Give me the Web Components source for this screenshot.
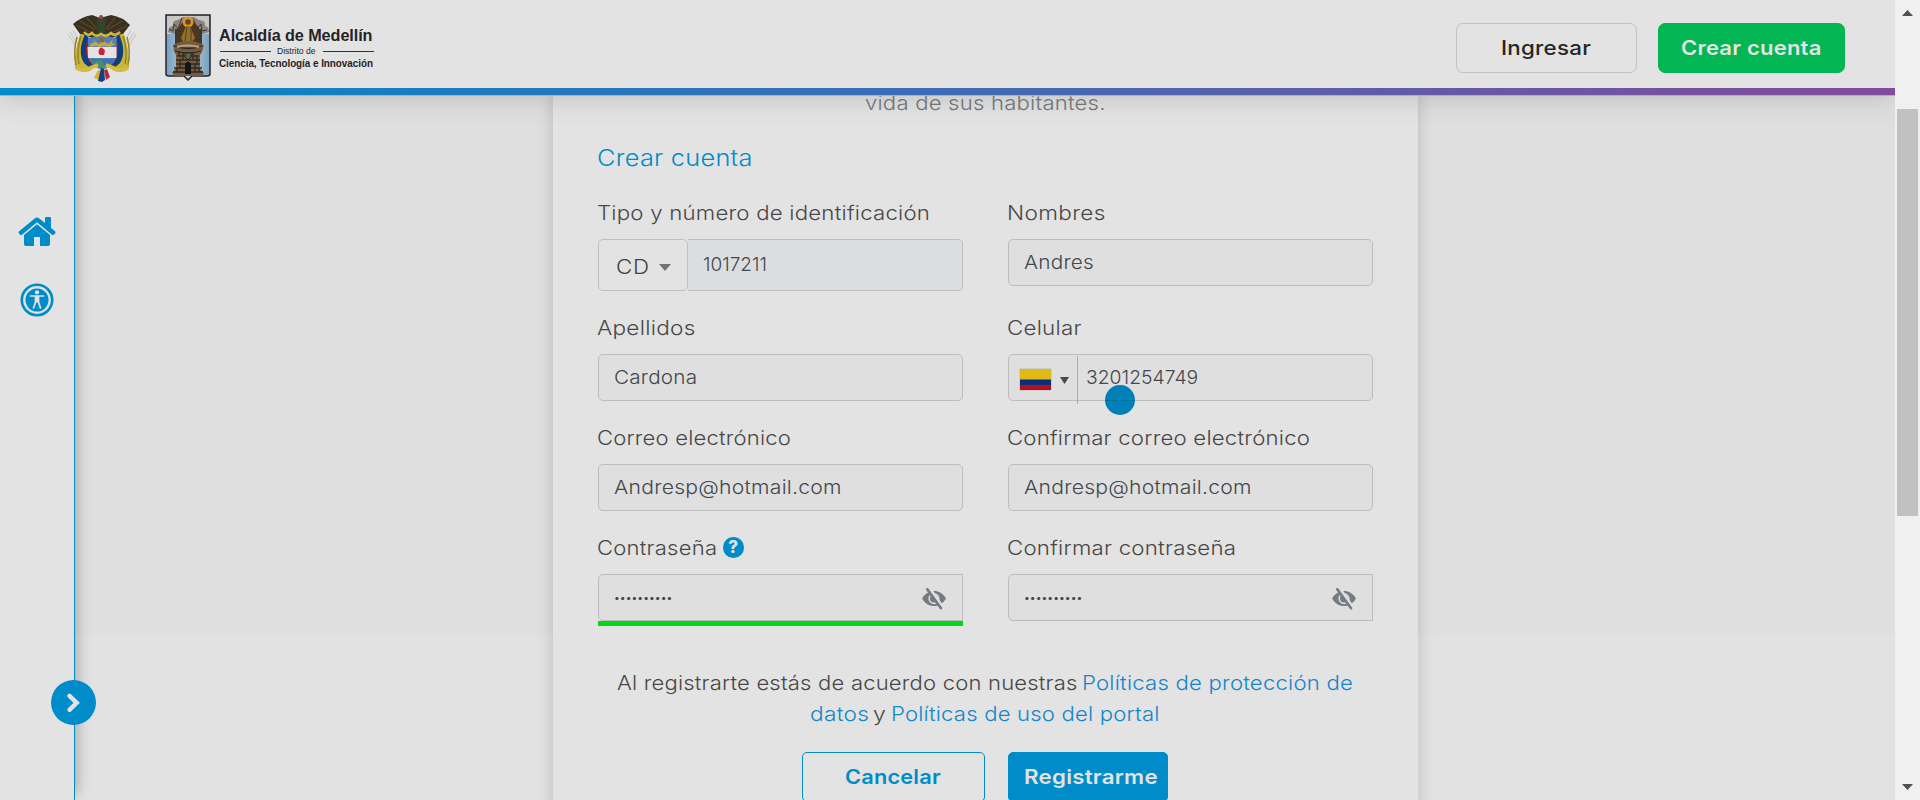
<!DOCTYPE html>
<html lang="es">
<head>
<meta charset="utf-8">
<title>Crear cuenta - Alcaldía de Medellín</title>
<style>
html,body{margin:0;height:100%}
body{height:800px;overflow:hidden;background:#e3e3e3;color:#484848;font:300 20px/30px Inter,"Open Sans",sans-serif;--blue:#008bc9;--surface:#e3e3e3}
</style>
</head>
<body>
<portal-app></portal-app>
<script>
function define(name, html, ready) {
  const tpl = document.createElement('template');
  tpl.innerHTML = html;
  customElements.define(name, class extends HTMLElement {
    constructor() {
      super();
      this.attachShadow({mode: 'open'}).append(tpl.content.cloneNode(true));
    }
    connectedCallback() { if (ready) ready(this, this.shadowRoot); }
  });
}

/* Text set to a fixed measure: mostly glyph width, a little tracking. */
define('fit-text', `<style>
:host{display:inline-block;white-space:nowrap;vertical-align:top;text-align:left}
span{display:inline-block;transform-origin:0 50%;margin-left:-1px}
</style><span><slot></slot></span>`, (el, root) => {
  const w = +el.getAttribute('w'), span = root.querySelector('span');
  el.style.width = w + 'px';
  const n = el.textContent.length, natural = span.offsetWidth, target = w + 1;
  const scale = Math.pow(target / natural, 0.85);
  span.style.letterSpacing = ((target / scale - natural) / Math.max(1, n - 1)) + 'px';
  span.style.transform = 'scaleX(' + scale + ')';
});

define('national-arms', `<style>:host{display:block;width:68px;height:70px}svg{display:block}</style>
<svg width="68" height="70" viewBox="0 0 68 70">
<path d="M8 28L2 18M8 33L0 20M60 28l6-10M60 33l8-13M9 23l-4-7M59 23l4-7" stroke="#cbcbc9" stroke-width="1.3"/>
<path d="M5 10Q13 3 24 1L32 4 43 1Q55 3 62 11L55 20 46 23 37 28 29 27 22 23 12 20Z" fill="#39301f"/>
<path d="M8 11l14 7M12 7l15 9M19 4l10 11M59 12l-14 6M54 7l-15 9M47 4L38 15" stroke="#5b4a29" stroke-width="1.2"/>
<path d="M29 6l4-5 5 4-1 11 3 5-7 4-6-4 3-6Z" fill="#35432a"/><circle cx="33" cy="3" r="2" fill="#a74452"/>
<path d="M12 20Q6 38 7 54Q15 61 24 56L20 51Q14 43 18 21Z" fill="#c9b638"/>
<path d="M9 23Q5 38 8 51M13 22Q8 38 11 50" fill="none" stroke="#948329" stroke-width="1.5"/>
<path d="M17 20Q9 38 16 49L23 55 28 51Q17 42 22 25Z" fill="#0e407f"/>
<path d="M21 26Q16 42 27 52" fill="none" stroke="#a51d31" stroke-width="3.2"/>
<path d="M56 20Q62 38 61 54Q53 61 44 56L48 51Q54 43 50 21Z" fill="#c9b638"/>
<path d="M59 23Q63 38 60 51M55 22Q60 38 57 50" fill="none" stroke="#948329" stroke-width="1.5"/>
<path d="M51 20Q59 38 52 49L45 55 40 51Q51 42 46 25Z" fill="#0e407f"/>
<path d="M47 26Q52 42 41 52" fill="none" stroke="#a51d31" stroke-width="3.2"/>
<path d="M20 24Q34 20 49 24L48 44Q45 52 34 56 23 52 20 43Z" fill="#4f7dbd"/>
<path d="M19.500 33h29v11H20Z" fill="#e4e2e3"/>
<path d="M16 18q4 5 8 1q4 5 9 1q5 4 10-1q4 4 9-1" fill="none" stroke="#cfb53d" stroke-width="2.600"/>
<path d="M22 30l5-2-3-3 7 5 4-4 5 4 5-5-1 4 4 1-6 3-6-1-4 1-5-1-5 1Z" fill="#c1a643"/>
<circle cx="34" cy="26" r="2.500" fill="#916638"/><path d="M30.500 39q0-5.500 3.500-5.500l3 3-1 4.500h-4Z" fill="#c72334"/>
<path d="M22 45h25l-4 6-9 4-8-4Z" fill="#3d74ae"/><path d="M24 48l9-2 4 5 7-1-9 5-9-4Z" fill="#498e6f"/>
<path d="M8 54q7 4 14 0l8-3M60 54q-7 4-14 0l-8-3" fill="none" stroke="#d3bd3e" stroke-width="3.600"/>
<path d="M30 56l-4 8 5 2 3-9Z" fill="#d4b531"/><path d="M33 54l-3 13 4 1 3-2-1-11Z" fill="#173f83"/><path d="M36 56l2 10 4-3-3-8Z" fill="#bd293c"/>
</svg>`);

define('medellin-shield', `<style>:host{display:block;width:46px;height:67px}svg{display:block}</style>
<svg width="46" height="67" viewBox="0 0 46 67">
<defs><linearGradient id="s" x1="0" x2="1"><stop stop-color="#749fc4"/><stop offset=".5" stop-color="#c0d3df"/><stop offset="1" stop-color="#779fbe"/></linearGradient></defs>
<path d="M1 1h44v59q0 2-3 2H27l-4 4-4-4H4q-3 0-3-2Z" fill="url(#s)" stroke="#292427" stroke-width="1.5"/>
<path d="M2 2h42v18H2Z" fill="#c9c7c5"/>
<path d="M3 18q1-6 5-6-1-6 5-6l5-3h11l5 3q7 0 6 6 4 0 4 6l-6 2H9Z" fill="#8b8380"/>
<path d="M4 15l4 2 1-7 4 5 4-11M42 16l-5 1-1-7-4 5-4-10" stroke="#413735" fill="none"/>
<path d="M10 15h6v17h-6ZM31 15h6v17h-6Z" fill="#44352b"/>
<path d="M14 13l5-7h9l6 8-1 14-9 3-10-4Z" fill="#4a371f"/>
<circle cx="23" cy="8" r="5.5" fill="#d9942b"/><circle cx="23" cy="8" r="2.800" fill="#674027"/>
<path d="M21 12h4l5 12-4 5H19l-3-5Z" fill="#92702a"/><path d="M22 13l-2 14M26 13v14" stroke="#573f19"/>
<path d="M8 31q15-8 31 0l-2 7-2 3v14l4 4-2 3H10l-3-3 4-5V41l-2-4Z" fill="#755c40"/>
<path d="M9 32q14 5 28 0M10 37q13 4 26 0M12 42h22M11 46h24M11 50h24M9 54h28M8 58h30M14 37v5M18 38v8M28 38v8M32 42v8M15 46v8M30 50v8M12 54v4M34 54v4" fill="none" stroke="#302821" stroke-width="1.3"/>
<path d="M12 33q10-3 22 0" fill="none" stroke="#b9a487" stroke-width="2"/>
<path d="M20 60V50q3-5 6 0v10Z" fill="#151416"/><path d="M21 39h5v4l-3 3-3-3Z" fill="#516b46" stroke="#292b20"/>
</svg>`);

define('city-brand', `<style>
:host{display:grid;width:154px;grid-template-rows:20px 11px 13px;font-family:"Liberation Sans",sans-serif;font-weight:700;color:#262326}
.t{font-size:17px;line-height:20px}.d{display:flex;align-items:center;justify-content:space-between;font-size:9px;line-height:11px;font-weight:400}
.d i{height:1px;width:51px;background:#343234}.b{font-size:10.500px;line-height:13px}
</style><div class="t"><fit-text w="153">Alcaldía de Medellín</fit-text></div>
<div class="d"><i></i><fit-text w="38">Distrito de</fit-text><i></i></div>
<div class="b"><fit-text w="153">Ciencia, Tecnología e Innovación</fit-text></div>`);

define('ui-button', `<style>
:host{display:flex;box-sizing:border-box;align-items:center;justify-content:center;height:50px;border:1px solid #c2c2c2;border-radius:7px;font-weight:500;font-size:20px;color:#262626}
:host([kind=success]){background:#02b653;border-color:#02b653;color:#e3e3e3;font-weight:600}
:host([kind=outline]){border-color:var(--blue);border-radius:5px;color:var(--blue);font-weight:600}
:host([kind=primary]){background:var(--blue);border-color:var(--blue);border-radius:5px;color:#e3e3e3;font-weight:600}
</style><slot></slot>`);

define('app-header', `<style>
:host{display:block;position:relative;z-index:3;height:96px;box-sizing:border-box;background:var(--surface);box-shadow:0 4px 24px rgba(70,80,95,.2)}
.in{display:flex;height:88px;padding:0 50px 0 68px;box-sizing:border-box}
national-arms{margin:14px 29px 0 0}medellin-shield{margin:14px 9px 0 0}city-brand{margin-top:26px}
.actions{display:flex;gap:21px;margin:23px 0 0 auto}
.bar{height:7px;background:linear-gradient(90deg,#008bc9 0,#008bc9 3%,#2079bf 27%,#4469b3 54%,#6559a7 76%,#834b9b 100%);border-bottom:1px solid #9bb4d4}
</style><div class="in"><national-arms></national-arms><medellin-shield></medellin-shield><city-brand></city-brand>
<div class="actions"><ui-button style="width:181px"><fit-text w="89">Ingresar</fit-text></ui-button><ui-button kind="success" style="width:187px"><fit-text w="139">Crear cuenta</fit-text></ui-button></div></div><div class="bar"></div>`);

define('side-nav', `<style>
:host{display:flex;flex-direction:column;align-items:center;position:relative;z-index:2;box-sizing:border-box;width:75px;flex:none;background:var(--surface);border-right:1px solid var(--blue);box-shadow:3px -6px 12px rgba(0,0,0,.24);padding-top:121px}
svg{display:block}.a{margin-top:37px}
.more{position:absolute;left:51px;top:584px}
</style>
<svg width="38" height="29" viewBox="0 0 38 29" fill="#008bc9"><path d="M1.2 14.2L17 1.2q2-1.6 4 0l6 4.9V1q0-1 1-1h4q1 0 1 1v10l4 3.3q1 1 .2 1.9l-1.3 1.5q-.9.9-1.9.1L19 5.2 4 17.8q-1 .8-1.9-.1L.8 16.1q-.7-1 .4-1.9Z"/><path d="M6 18L19 7.3 32 18v9q0 2-2 2h-8v-9h-6v9H8q-2 0-2-2Z"/></svg>
<svg class="a" width="34" height="34" viewBox="0 0 34 34"><circle cx="17" cy="17" r="15.2" fill="none" stroke="#008bc9" stroke-width="2.6"/><circle cx="17" cy="17" r="11.5" fill="#008bc9"/><circle cx="17" cy="9.3" r="2.1" fill="#e3e3e3"/><path d="M10.5 13h13M15.5 13v6l-2 6M18.5 13v6l2 6" fill="none" stroke="#e3e3e3" stroke-width="1.7" stroke-linecap="round"/><path d="M15 13h4v6.5h-4Z" fill="#e3e3e3"/></svg>
<svg class="more" width="45" height="45" viewBox="0 0 45 45"><circle cx="22.5" cy="22.5" r="22.5" fill="#008bc9"/><path d="M18.5 15.8l7.2 7-7.2 7" fill="none" stroke="#e3e3e3" stroke-width="4.4" stroke-linecap="round"/></svg>`);

define('form-field', `<style>
:host{display:block}label{display:flex;height:30px;margin-bottom:11px}
</style><label><slot name="label"></slot></label><slot></slot>`);

define('text-box', `<style>
:host{display:flex;box-sizing:border-box;width:365px;height:47px;border:1px solid #bbbdc0;border-radius:5px;background:#dfdfdf;padding-left:15.5px;font-size:19px;line-height:45px;color:#43484d;position:relative}
</style><slot></slot>`);

define('id-box', `<style>
:host{display:flex;width:365px;height:52px}
.type{display:flex;box-sizing:border-box;width:90px;border:1px solid #bfc0c1;border-radius:5px;padding:3px 16px 0 18px;justify-content:space-between;line-height:49px;color:#424242}
svg{margin-top:21px}.num{flex:1;box-sizing:border-box;border:1px solid #bbbec3;border-left:0;border-radius:0 5px 5px 0;background:#dcdddf;padding-left:16px;font-size:19px;line-height:49px;color:#43484d}
</style><div class="type"><fit-text w="32">CD</fit-text><svg width="12" height="7"><path d="M0 0h12L6 7Z" fill="#737373"/></svg></div><div class="num"><fit-text w="63">1017211</fit-text></div>`);

define('phone-box', `<style>
:host{display:block}text-box{padding-left:11px}
.flag{display:block;margin:14px 9px 0 0;box-shadow:0 0 1px #777}.caret{margin-top:22px}
.line{width:1px;height:48px;margin:1px 8.5px 0 8px;background:#abadb0;flex:none}
.dot{position:absolute;left:96px;top:30px;width:30px;height:30px;border-radius:50%;background:linear-gradient(#0080b9 15px,#00719f 15px,#00719f 16px,#0080b9 16px)}
</style><text-box><svg class="flag" width="31" height="21"><path d="M0 0h31v11H0Z" fill="#dfba17"/><path d="M0 10.5h31V16H0Z" fill="#0b2e7d"/><path d="M0 16h31v5H0Z" fill="#b80f20"/></svg><svg class="caret" width="9" height="7"><path d="M0 0h9L4.5 7Z" fill="#484848"/></svg><div class="line"></div><fit-text w="111">3201254749</fit-text><div class="dot"></div></text-box>`);

define('password-box', `<style>
:host{display:block}:host([strong]){border-bottom:5px solid #02d911}
text-box{border-radius:5px 0 0 5px}.dots{font-size:10px;line-height:45px;font-weight:400}
svg{margin:13px 16px 0 auto}
</style><text-box><fit-text class="dots" w="57">••••••••••</fit-text>
<svg width="24" height="22" viewBox="0 0 24 22"><path fill="#747b82" fill-rule="evenodd" d="M0 10.5C3 5.5 7 3 12 3s9 2.5 12 7.5c-3 5-7 7.5-12 7.5S3 15.500 0 10.500ZM12 5a5.600 5.600 0 1 0 0 11.200A5.600 5.600 0 1 0 12 5Z"/><circle cx="12" cy="10.600" r="4" fill="#747b82"/><circle cx="14" cy="8.600" r="1.700" fill="#dfdfdf"/><path d="M7 0l14 20" stroke="#dfdfdf" stroke-width="3.600"/><path d="M5.300 1.200l13.700 19" stroke="#747b82" stroke-width="2.600" stroke-linecap="round"/></svg></text-box>`);

define('help-icon', `<style>
:host{display:grid;place-items:center;width:20.500px;height:20.500px;border-radius:50%;background:var(--blue);color:#e3e3e3;font:800 17px/20px Inter,sans-serif;margin:4px 0 0 6px}
</style>?`);

define('signup-card', `<style>
:host{display:block;box-sizing:border-box;width:865px;height:730px;margin:-8px 0 0 478px;padding:0 45px;background:var(--surface);box-shadow:0 0 15px rgba(0,0,0,.17)}
.intro{height:30px;display:flex;justify-content:center;color:#777}
h2{font:inherit;font-size:23px;color:var(--blue);height:30px;margin:25px 0}
.grid{display:grid;grid-template-columns:365px 365px;gap:22px 45px}
.terms{margin-top:42px;margin-left:19.500px;line-height:31px}
.terms div{display:flex}.terms div+div{margin-left:193px}.g{width:6px}a{color:#1487c9}
.buttons{display:flex;gap:23px;margin:22px 0 0 204px}
</style>
<div class="intro"><fit-text w="239">vida de sus habitantes.</fit-text></div>
<h2><fit-text w="154">Crear cuenta</fit-text></h2>
<div class="grid">
<form-field><fit-text slot="label" w="332">Tipo y número de identificación</fit-text><id-box></id-box></form-field>
<form-field><fit-text slot="label" w="97">Nombres</fit-text><text-box><fit-text w="69">Andres</fit-text></text-box></form-field>
<form-field><fit-text slot="label" w="97">Apellidos</fit-text><text-box><fit-text w="82">Cardona</fit-text></text-box></form-field>
<form-field><fit-text slot="label" w="73">Celular</fit-text><phone-box></phone-box></form-field>
<form-field><fit-text slot="label" w="193">Correo electrónico</fit-text><text-box><fit-text w="226">Andresp@hotmail.com</fit-text></text-box></form-field>
<form-field><fit-text slot="label" w="302">Confirmar correo electrónico</fit-text><text-box><fit-text w="226">Andresp@hotmail.com</fit-text></text-box></form-field>
<form-field><fit-text slot="label" w="119">Contraseña</fit-text><help-icon slot="label"></help-icon><password-box strong></password-box></form-field>
<form-field><fit-text slot="label" w="228">Confirmar contraseña</fit-text><password-box></password-box></form-field>
</div>
<div class="terms"><div><fit-text w="459">Al registrarte estás de acuerdo con nuestras</fit-text><span class="g"></span><a><fit-text w="270">Políticas de protección de</fit-text></a></div>
<div><a><fit-text w="58">datos</fit-text></a><span class="g" style="width:5px"></span><fit-text w="12">y</fit-text><span class="g"></span><a><fit-text w="268">Políticas de uso del portal</fit-text></a></div></div>
<div class="buttons"><ui-button kind="outline" style="width:183px"><fit-text w="95">Cancelar</fit-text></ui-button><ui-button kind="primary" style="width:160px;padding-left:6px"><fit-text w="133">Registrarme</fit-text></ui-button></div>`);

define('page-scrollbar', `<style>
:host{display:flex;flex-direction:column;align-items:center;justify-content:space-between;position:relative;z-index:4;box-sizing:border-box;width:25px;height:800px;background:#f0f0f0;padding:10px 0}
svg{display:block}.thumb{width:21px;height:407px;background:#c1c1c1;margin-bottom:175px}
</style><svg width="11" height="6"><path d="M0 6h11L5.500 0Z" fill="#505050"/></svg><div class="thumb"></div><svg width="11" height="6"><path d="M0 0h11L5.500 6Z" fill="#505050"/></svg>`);

define('portal-app', `<style>
:host{display:grid;grid-template-columns:1895px 25px;height:800px;overflow:hidden}
.page{height:800px;overflow:hidden}
.body{display:flex;height:704px}
main{flex:1;background:linear-gradient(#dfdfdf 539px,#e2e2e2 539px)}
</style><div class="page"><app-header></app-header><div class="body"><side-nav></side-nav><main><signup-card></signup-card></main></div></div><page-scrollbar></page-scrollbar>`);
</script>
</body>
</html>
